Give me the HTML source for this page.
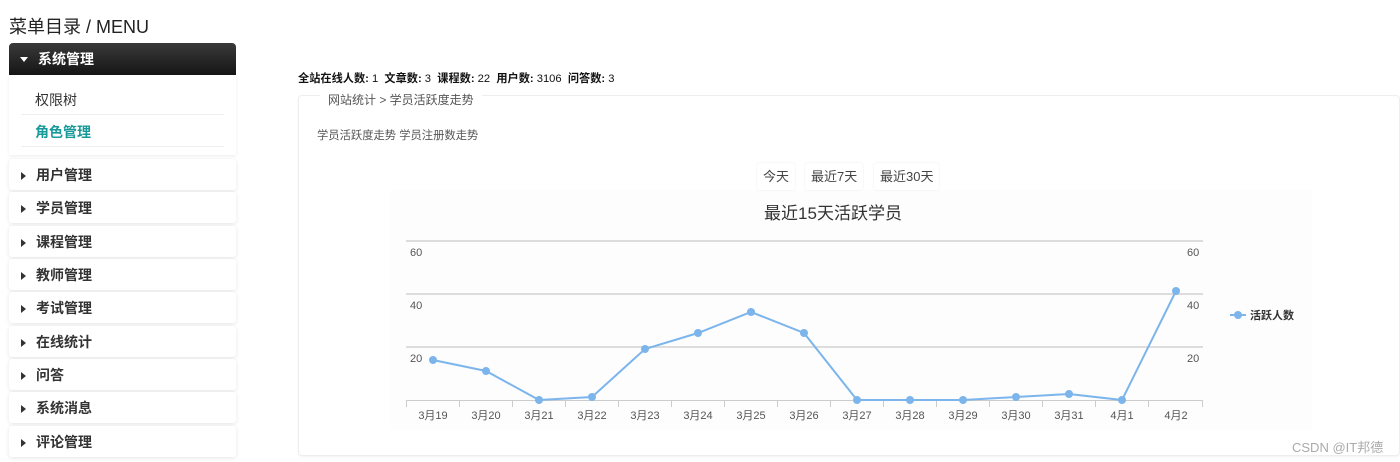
<!DOCTYPE html>
<html><head><meta charset="utf-8"><style>
html,body{margin:0;width:1400px;height:462px;overflow:hidden}
body{background:#fff;font-family:"Liberation Sans","Noto Sans CJK SC",sans-serif;position:relative;color:#333}
.abs{position:absolute}
.title{left:9px;top:13px;font-size:18px;color:#222}
.hdr{left:9px;top:43px;width:227px;height:32px;background:linear-gradient(#3a3a3a,#151515);border-radius:4px 4px 0 0;color:#fff;font-weight:bold;font-size:14px;line-height:33px}
.sub{left:9px;top:75px;width:227px;height:80px;background:#fff;box-shadow:0 1px 3px rgba(0,0,0,.08)}
.si{position:absolute;left:12px;width:203px;height:31px;border-bottom:1px solid #eee;font-size:14px;line-height:33px;padding-left:14px;box-sizing:border-box}
.item{left:9px;width:227px;height:31px;background:#fff;box-shadow:0 1px 4px rgba(0,0,0,.1);border-radius:3px;font-size:14px;font-weight:bold;line-height:33px;color:#333}
.tri{display:inline-block;width:0;height:0;border-top:4px solid transparent;border-bottom:4px solid transparent;border-left:5px solid #333;margin:0 10px 0 12px;vertical-align:0px}
.tri2{display:inline-block;width:0;height:0;border-left:4px solid transparent;border-right:4px solid transparent;border-top:5px solid #fff;margin:0 10px 0 11px;vertical-align:2px}
.stats{left:298px;top:70px;font-size:11.2px;color:#111}
.panel{left:298px;top:95px;width:1100px;height:359px;border:1px solid #eee;border-radius:4px;box-shadow:0 1px 2px rgba(0,0,0,.05)}
.btn{top:163px;height:27px;line-height:27px;font-size:13px;color:#444;padding:0 6px;border-radius:3px;box-shadow:0 0 2px rgba(0,0,0,.08);background:#fff}
</style></head><body>
<div class="abs title">菜单目录 / MENU</div>
<div class="abs hdr"><span class="tri2"></span>系统管理</div>
<div class="abs sub">
<div class="si" style="top:9px">权限树</div>
<div class="si" style="top:41px;color:#199a9a;font-weight:bold">角色管理</div>
</div>
<div class="abs item" style="top:159px"><span class="tri"></span>用户管理</div>
<div class="abs item" style="top:192px"><span class="tri"></span>学员管理</div>
<div class="abs item" style="top:226px"><span class="tri"></span>课程管理</div>
<div class="abs item" style="top:259px"><span class="tri"></span>教师管理</div>
<div class="abs item" style="top:292px"><span class="tri"></span>考试管理</div>
<div class="abs item" style="top:326px"><span class="tri"></span>在线统计</div>
<div class="abs item" style="top:359px"><span class="tri"></span>问答</div>
<div class="abs item" style="top:392px"><span class="tri"></span>系统消息</div>
<div class="abs item" style="top:426px"><span class="tri"></span>评论管理</div>

<div class="abs stats"><b>全站在线人数:</b> 1&nbsp; <b>文章数:</b> 3&nbsp; <b>课程数:</b> 22&nbsp; <b>用户数:</b> 3106&nbsp; <b>问答数:</b> 3</div>
<div class="abs panel"></div>
<div class="abs" style="left:320px;top:91px;padding:0 8px;background:#fff;font-size:12px;color:#555">网站统计 &gt; 学员活跃度走势</div>
<div class="abs" style="left:317px;top:127px;font-size:11.3px;color:#555">学员活跃度走势 学员注册数走势</div>
<div class="abs" style="left:390px;top:190px;width:922px;height:240px;background:#fdfdfd"></div>
<div class="abs btn" style="left:757px">今天</div>
<div class="abs btn" style="left:805px">最近7天</div>
<div class="abs btn" style="left:874px">最近30天</div>
<div class="abs" style="left:0;width:1666px;top:199px;font-size:17px;color:#333;text-align:center">最近15天活跃学员</div>

<svg class="abs" style="left:0;top:0" width="1400" height="462" font-family="Liberation Sans, Noto Sans CJK SC, sans-serif">
<g stroke="#ddd" stroke-width="2">
<line x1="406" y1="241" x2="1203" y2="241"/>
<line x1="406" y1="294" x2="1203" y2="294"/>
<line x1="406" y1="347" x2="1203" y2="347"/>
</g>
<line x1="406" y1="400.5" x2="1203" y2="400.5" stroke="#ccc"/>
<g stroke="#ccc">
<line x1="406.5" y1="400" x2="406.5" y2="407"/><line x1="459.5" y1="400" x2="459.5" y2="407"/><line x1="512.5" y1="400" x2="512.5" y2="407"/><line x1="565.5" y1="400" x2="565.5" y2="407"/><line x1="618.5" y1="400" x2="618.5" y2="407"/><line x1="671.5" y1="400" x2="671.5" y2="407"/><line x1="724.5" y1="400" x2="724.5" y2="407"/><line x1="777.5" y1="400" x2="777.5" y2="407"/><line x1="830.5" y1="400" x2="830.5" y2="407"/><line x1="883.5" y1="400" x2="883.5" y2="407"/><line x1="936.5" y1="400" x2="936.5" y2="407"/><line x1="989.5" y1="400" x2="989.5" y2="407"/><line x1="1042.5" y1="400" x2="1042.5" y2="407"/><line x1="1095.5" y1="400" x2="1095.5" y2="407"/><line x1="1148.5" y1="400" x2="1148.5" y2="407"/><line x1="1202.5" y1="400" x2="1202.5" y2="407"/>
</g>
<g font-size="11" fill="#555">
<text x="410" y="256">60</text><text x="410" y="309">40</text><text x="410" y="362">20</text>
<text x="1187" y="256">60</text><text x="1187" y="309">40</text><text x="1187" y="362">20</text>
</g>
<g font-size="11" fill="#555" text-anchor="middle">
<text x="433" y="419">3月19</text><text x="486" y="419">3月20</text><text x="539" y="419">3月21</text><text x="592" y="419">3月22</text><text x="645" y="419">3月23</text><text x="698" y="419">3月24</text><text x="751" y="419">3月25</text><text x="804" y="419">3月26</text><text x="857" y="419">3月27</text><text x="910" y="419">3月28</text><text x="963" y="419">3月29</text><text x="1016" y="419">3月30</text><text x="1069" y="419">3月31</text><text x="1122" y="419">4月1</text><text x="1176" y="419">4月2</text>
</g>
<polyline fill="none" stroke="#7cb5ec" stroke-width="2" points="433,360 486,371 539,400 592,397 645,349 698,333 751,312 804,333 857,400 910,400 963,400 1016,397 1069,394 1122,400 1176,291"/>
<g fill="#7cb5ec">
<circle cx="433" cy="360" r="4"/><circle cx="486" cy="371" r="4"/><circle cx="539" cy="400" r="4"/><circle cx="592" cy="397" r="4"/><circle cx="645" cy="349" r="4"/><circle cx="698" cy="333" r="4"/><circle cx="751" cy="312" r="4"/><circle cx="804" cy="333" r="4"/><circle cx="857" cy="400" r="4"/><circle cx="910" cy="400" r="4"/><circle cx="963" cy="400" r="4"/><circle cx="1016" cy="397" r="4"/><circle cx="1069" cy="394" r="4"/><circle cx="1122" cy="400" r="4"/><circle cx="1176" cy="291" r="4"/>
<line x1="1230" y1="315" x2="1246" y2="315" stroke="#7cb5ec" stroke-width="2"/><circle cx="1238" cy="315" r="4"/>
</g>
<text x="1250" y="319" font-size="11" font-weight="bold" fill="#333">活跃人数</text>
<text x="1292" y="452" font-size="13" fill="#aaa">CSDN @IT邦德</text>
</svg>
</body></html>
